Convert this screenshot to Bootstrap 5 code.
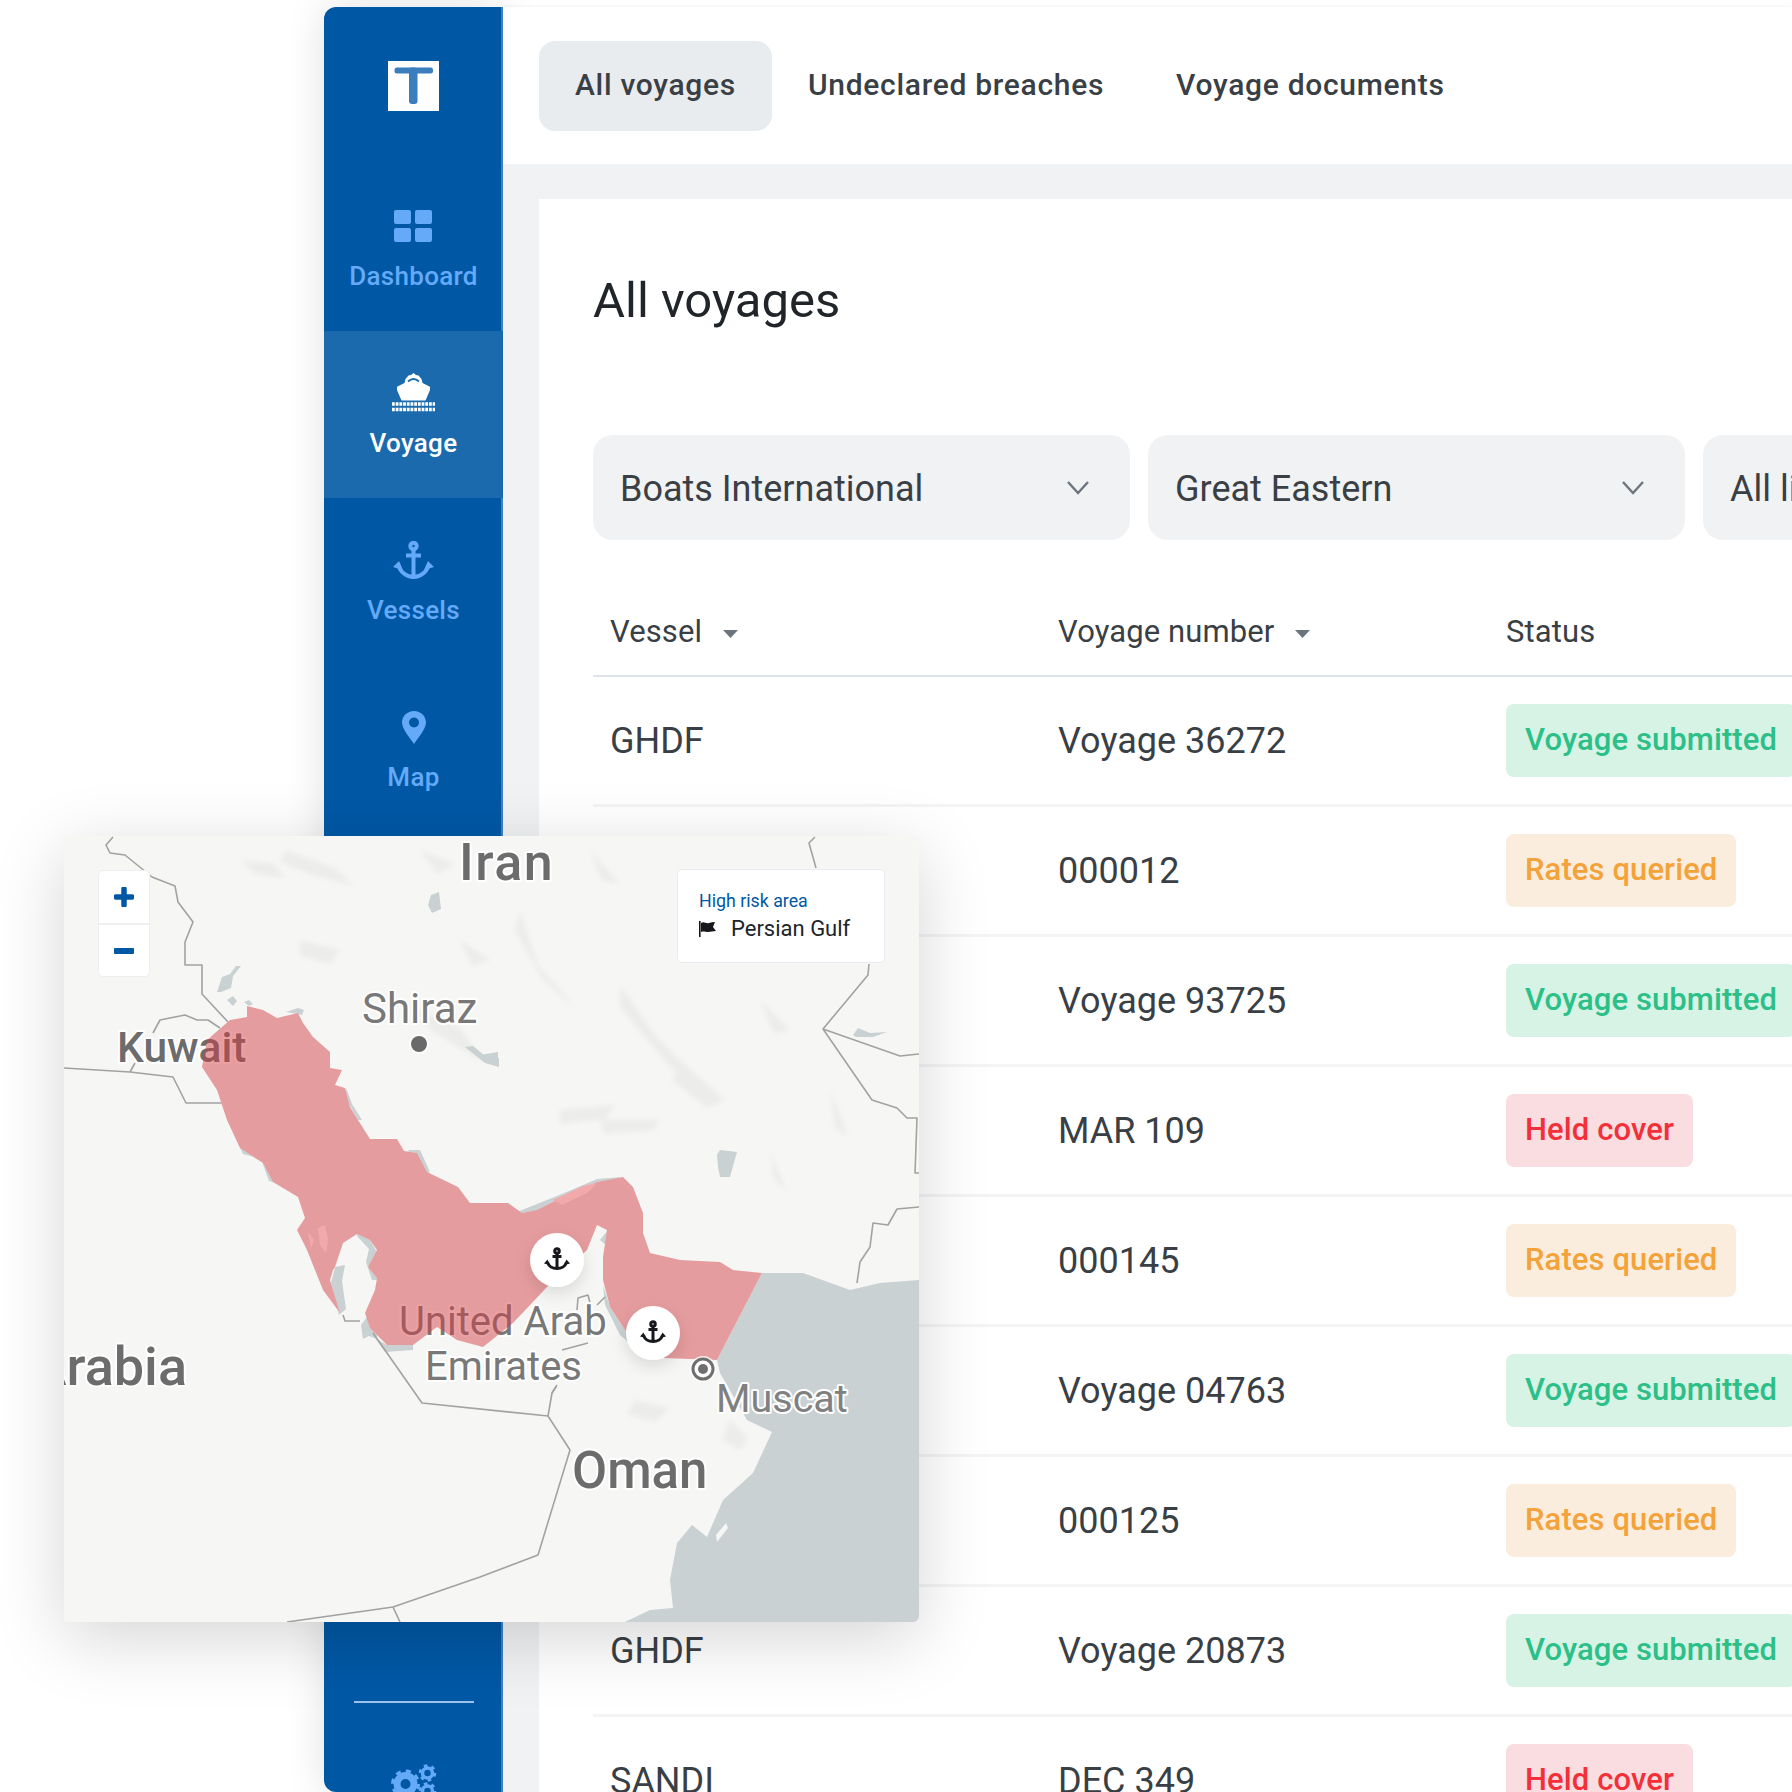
<!DOCTYPE html>
<html lang="en">
<head>
<meta charset="utf-8">
<title>All voyages</title>
<link href="https://cdn.jsdelivr.net/npm/bootstrap@5.3.0/dist/css/bootstrap.min.css" rel="stylesheet">
<style>
html,body{height:1792px;overflow:hidden}
body{background:#fff;font-family:Roboto,"Liberation Sans",sans-serif;color:#3a3f45}
.shell{width:1792px;height:1785px;margin-top:7px;padding-left:324px}
.side{width:179px;flex:none;height:1785px;background:#0058a5;border-radius:12px 0 0 12px;box-shadow:inset -2px 0 0 #3f83c4,0 0 40px rgba(0,0,0,.12);overflow:hidden}
.logo-cell{height:157px}
.logo-mark{width:51px;height:50px;display:block}
.side-item{height:167px;padding-top:40px;color:#64aaf9;font-size:26px;line-height:32px;font-weight:500;letter-spacing:.3px;text-decoration:none}
.side-item.on{background:#1a6aad;color:#fff}
.side-ico{height:44px;margin-bottom:12px}
.side-foot{height:91px;flex:none}
.side-rule{width:120px;height:2px;background:#9cc3ea;margin:0 auto 61px}
.main-col{min-width:0;background:#f1f2f4;box-shadow:0 -1px 3px rgba(0,0,0,.05)}
.topbar{height:157px;background:#fff;padding-left:36px}
.tabs-row{margin-top:34px}
.topbar .nav-link{height:90px;padding:0 36px;font-size:30px;letter-spacing:.7px;font-weight:500;color:#3a3f45;line-height:88px;border-radius:16px;white-space:nowrap}
.topbar .nav-link.active{background:#e9ecef;color:#3a3f45}
.body-pad{padding:35px 0 0 36px}
.sheet{background:#fff;padding:72px 0 0 54px;height:1700px;width:1400px}
.sheet h1{font-size:49px;line-height:60px;font-weight:400;color:#212529;margin:0 0 104px}
.form-select.pick{flex:none;width:537px;height:105px;background-color:#f1f2f4;border:0;border-radius:20px;font-size:36px;color:#3a3f45;padding:2px 27px 0;background-size:30px 22px;background-position:right 37px center;
background-image:url("data:image/svg+xml,%3csvg xmlns='http://www.w3.org/2000/svg' viewBox='0 0 30 22'%3e%3cpath fill='none' stroke='%236c757d' stroke-width='2.4' d='M5 5l10 11 10-11'/%3e%3c/svg%3e")}
.picks{gap:18px;margin-bottom:60px}
.voy{table-layout:fixed;width:1400px;margin:0}
.voy th{height:76px;padding:0 0 10px 17px;font-size:31px;letter-spacing:.1px;font-weight:400;color:#3a3f45;border-bottom:2px solid #dfe3e8;vertical-align:middle;box-shadow:none}
.voy td{height:130px;padding:2px 0 0 17px;font-size:36px;color:#3a3f45;border-bottom:3px solid #f3f4f6;vertical-align:middle}
.voy td:last-child{padding-top:0}
.voy tbody tr:first-child td{height:129px}
.col-a{width:448px}.col-b{width:448px}
.sort-tri{display:inline-block;width:15px;height:8px;margin-left:21px;vertical-align:middle;fill:#6c757d}
.voy .badge{height:73px;line-height:72px;padding:0 19px;font-size:31px;letter-spacing:.1px;font-weight:500;border-radius:8px;display:inline-block}
.st-green{background:#d6f3e6;color:#2cc088}
.st-orange{background:#fbeddd;color:#f3a33a}
.st-red{background:#f9dde0;color:#f3303a}
.map-box{position:absolute;left:64px;top:836px;width:855px;height:786px;background:#f6f6f4;border-radius:0 0 6px 0;box-shadow:0 16px 70px rgba(0,0,0,.17);overflow:hidden}
.map-svg{display:block;width:855px;height:786px}
.mlabel{font-family:Roboto,"Noto Sans",sans-serif;fill:#6c6c6c;paint-order:stroke;stroke:#fff;stroke-width:4px;stroke-linejoin:round}
.ml-soft{fill:#787878}
.ml-mid{fill:#808080}
.ml-wide{letter-spacing:1.500px}
.zoom-ctl{position:absolute;left:34px;top:34px;width:52px;height:107px;background:#fff;border:1px solid #eceef0;border-radius:5px}
.zoom-ctl div{height:53px}
.zoom-ctl div+div{border-top:2px solid #eef0f2}
.legend-box{position:absolute;left:613px;top:33px;width:208px;height:94px;background:#fff;border:1px solid #e9ecef;border-radius:5px;padding:19px 0 0 21px}
.legend-head{font-size:17.8px;line-height:24px;color:#0058a5}
.legend-row{font-size:22px;line-height:30px;color:#212529;gap:15px;margin-top:1px}
</style>
</head>
<body>
<div class="shell d-flex">
  <aside class="side d-flex flex-column">
    <div class="logo-cell d-flex align-items-center justify-content-center">
      <svg class="logo-mark" viewBox="0 0 51 50"><rect width="51" height="50" fill="#fff"/><rect x="6.500" y="6.500" width="38.500" height="6" rx="2.500" fill="#3b7ebd"/><rect x="21" y="6.500" width="8.500" height="36.500" rx="3" fill="#3b7ebd"/></svg>
    </div>
    <a class="side-item d-flex flex-column align-items-center" href="#">
      <span class="side-ico d-flex align-items-center"><svg width="39" height="32" viewBox="0 0 39 32" fill="#64aaf9"><rect width="17" height="14" rx="2"/><rect x="21" width="17" height="14" rx="2"/><rect y="18" width="17" height="14" rx="2"/><rect x="21" y="18" width="17" height="14" rx="2"/></svg></span>
      Dashboard
    </a>
    <a class="side-item on d-flex flex-column align-items-center" href="#">
      <span class="side-ico d-flex align-items-center"><svg width="45" height="40" viewBox="0 0 45 40"><path fill="#fff" d="M22.500 0l2.500 2 2.500.5 3 3.500 1 4 7.500 3.800v3.200l-4.500 10.500h-24L6 17v-3.200L13.500 10l1-4 3-3.500L20 2z"/><path d="M17 8.500q5.500-5 11 0" fill="none" stroke="#1a6aad" stroke-width="1.800"/><path d="M1 31h43M1 36.500h43" fill="none" stroke="#fff" stroke-width="3.400" stroke-dasharray="2.800 .9"/></svg></span>
      Voyage
    </a>
    <a class="side-item d-flex flex-column align-items-center" href="#">
      <span class="side-ico d-flex align-items-center"><svg width="41" height="39" viewBox="0 0 41 39" fill="none" stroke="#64aaf9" stroke-width="4"><circle cx="20.500" cy="5" r="3.200"/><path d="M20.500 8v28M13 14.500h15M5 23c1.500 8 9 13 15.500 13S34.500 31 36 23"/><path d="M0 26l6-6 4 9z M41 26l-6-6-4 9z" fill="#64aaf9" stroke="none"/></svg></span>
      Vessels
    </a>
    <a class="side-item d-flex flex-column align-items-center" href="#">
      <span class="side-ico d-flex align-items-center"><svg width="24" height="33" viewBox="0 0 24 33"><path fill="#64aaf9" fill-rule="evenodd" d="M12 0C5.400 0 0 5 0 11.500 0 18 8 27 12 33c4-6 12-15 12-21.500C24 5 18.600 0 12 0zm0 6.500a5 5 0 1 1 0 10 5 5 0 0 1 0-10z"/></svg></span>
      Map
    </a>
    <div class="side-foot mt-auto">
      <div class="side-rule"></div>
      <svg class="d-block mx-auto" width="46" height="40" viewBox="0 0 46 40" fill="none" stroke="#64aaf9"><circle cx="14.500" cy="20" r="8.500" stroke-width="7"/><circle cx="14.500" cy="20" r="13" stroke-width="3" stroke-dasharray="5 5.200"/><circle cx="36.500" cy="9" r="5" stroke-width="3.500"/><circle cx="36.500" cy="9" r="7.500" stroke-width="2.500" stroke-dasharray="3.600 4.250"/><circle cx="36.500" cy="27" r="5" stroke-width="3.500"/><circle cx="36.500" cy="27" r="7.500" stroke-width="2.500" stroke-dasharray="3.600 4.250"/></svg>
    </div>
  </aside>
  <div class="main-col flex-grow-1 overflow-hidden">
    <nav class="topbar d-flex align-items-start">
      <ul class="nav nav-pills flex-nowrap tabs-row">
        <li class="nav-item"><a class="nav-link active" href="#">All voyages</a></li>
        <li class="nav-item"><a class="nav-link" href="#">Undeclared breaches</a></li>
        <li class="nav-item"><a class="nav-link" href="#">Voyage documents</a></li>
      </ul>
    </nav>
    <div class="body-pad">
      <section class="sheet">
        <h1>All voyages</h1>
        <div class="picks d-flex">
          <select class="form-select pick"><option>Boats International</option></select>
          <select class="form-select pick"><option>Great Eastern</option></select>
          <select class="form-select pick"><option>All lines</option></select>
        </div>
        <table class="table voy">
          <thead><tr>
            <th class="col-a">Vessel<svg class="sort-tri" viewBox="0 0 15 8"><path d="M0 0h15L7.500 8z"/></svg></th>
            <th class="col-b">Voyage number<svg class="sort-tri" viewBox="0 0 15 8"><path d="M0 0h15L7.500 8z"/></svg></th>
            <th>Status</th>
          </tr></thead>
          <tbody>
            <tr><td>GHDF</td><td>Voyage 36272</td><td><span class="badge st-green">Voyage submitted</span></td></tr>
            <tr><td></td><td>000012</td><td><span class="badge st-orange">Rates queried</span></td></tr>
            <tr><td></td><td>Voyage 93725</td><td><span class="badge st-green">Voyage submitted</span></td></tr>
            <tr><td></td><td>MAR 109</td><td><span class="badge st-red">Held cover</span></td></tr>
            <tr><td></td><td>000145</td><td><span class="badge st-orange">Rates queried</span></td></tr>
            <tr><td></td><td>Voyage 04763</td><td><span class="badge st-green">Voyage submitted</span></td></tr>
            <tr><td></td><td>000125</td><td><span class="badge st-orange">Rates queried</span></td></tr>
            <tr><td>GHDF</td><td>Voyage 20873</td><td><span class="badge st-green">Voyage submitted</span></td></tr>
            <tr><td>SANDI</td><td>DEC 349</td><td><span class="badge st-red">Held cover</span></td></tr>
          </tbody>
        </table>
      </section>
    </div>
  </div>
</div>

<div class="map-box">
  <svg class="map-svg" viewBox="64 836 855 786">
    <defs>
      <filter id="ms" x="-40%" y="-40%" width="180%" height="180%"><feDropShadow dx="0" dy="6" stdDeviation="8" flood-color="#000" flood-opacity=".12"/></filter>
      <filter id="soft"><feGaussianBlur stdDeviation="2.500"/></filter>
      <path id="riskshape" d="M247 1006L263 1010 277 1018 298 1013 303 1023 313 1037 330 1052 330 1068 342 1070 335 1085 345 1088 350 1107 358 1120 370 1139 397 1139 404 1151 417 1153 427 1172 458 1187 470 1203 508 1203 522 1213 537 1210 563 1197 597 1182 623 1177 633 1187 643 1213 643 1233 650 1253 680 1260 720 1262 733 1270 762 1273 717 1360 663 1358 627 1333 610 1307 603 1280 603 1257 607 1230 597 1225 587 1250 547 1287 513 1323 483 1347 457 1340 437 1327 413 1345 387 1345 370 1328 365 1313 375 1290 377 1278 368 1267 377 1250 370 1240 357 1234 343 1243 335 1267 333 1270 330 1280 340 1313 323 1290 307 1250 297 1230 305 1218 298 1197 273 1182 263 1163 240 1148 227 1120 217 1090 202 1067 207 1040 230 1020 247 1017z"/>
      <g id="anc" fill="none" stroke="#16181b" stroke-width="3">
        <circle cx="13" cy="3" r="2.300"/><path d="M13 5v15.500M8.500 8.500h9M3.500 14c1 4.500 5.500 6.500 9.500 6.500s8.500-2 9.500-6.500"/><path d="M0 15.500l3.500-4 2.500 5.500zM26 15.500l-3.500-4-2.500 5.500z" fill="#16181b" stroke="none"/>
      </g>
    </defs>
    <!-- terrain -->
    <g fill="#ecedea" filter="url(#soft)">
      <path d="M285 850l50 18 20 18-40-10-35-14zM520 910l18 55 40 45-35-30-28-50zM620 985l35 50 50 50-35-18-50-60zM400 1000l60 28 25 35-50-30zM680 1060l45 40-18 8-35-28zM240 860l35 4 10 14-30-4zM560 1110l55-5-10 14-45 5zM420 850l35 14-18 10zM830 1090l18 46-13-8zM300 940l40 10-10 14-30-8zM460 940l30 20-18 6zM590 850l30 34-18-4zM700 900l20 60-15-20zM760 1000l30 30-16 4z"/>
      <path d="M330 1180l50-30 25-8-38 38zM635 1400l35 8-15 14-28-8zM730 1420l18 18-8 12-18-10zM600 1120l60 0-6 10-50 4zM770 1150l16 40-12-10z"/>
    </g>
    <!-- sea -->
    <path fill="#c9d1d3" d="M762 1273L803 1273 850 1290 880 1283 919 1280V1622H625L650 1610 673 1608 670 1580 677 1543 692 1525 707 1537 723 1500 753 1473 772 1432 747 1420 720 1373 717 1360z"/>
    <path fill="#f6f6f4" d="M716 1535l10-12 2 5-11 14z"/>
    <!-- lakes and coast -->
    <g fill="#c9d1d3">
      <path d="M428 905l3-10 8-3 2 17-9 4zM217 992l5-15 8-3 6-8 5 0-8 10-2 12-10 4zM244 1002l5-2 4 4-4 2zM717 1155l3-5 17 2-4 14-3 11-10 0-2-10zM465 1047l8-1 12 10 14 2 0 9-14-4zM853 1035l5-7 12 5 17-1-14 5-17 0zM227 1000l6-4 4 5-4 5zM480 1055l18-3 0 14-12-4z"/>
      <path d="M240 1148l15 5 13 5 8 25-7-2-8-22-18-5zM342 1100l8 6 8 14 4 0-10-16-6-16zM286 1012l12-4 6 2-2 5zM408 1150l12 0 10 22-5 2zM335 1267l-4 16 8 32 7-6-4-28 3-16zM357 1232l12 6 9 16-5 16 5 10-6 0-6-18 3-13-12-13zM361 1325l6-8 10 14 0 8-8-3-6 3zM375 1338l12 7 26 0 0 5-28 2zM517 1212l45-18 35-15 25-2-40 12-40 20-20 10zM600 1240l8-10 8 25-8 30-2-40zM603 1285l7 22 17 26 5 12-12-10-15-30z"/>
    </g>
    <!-- borders -->
    <g fill="none" stroke="#a2a2a0" stroke-width="1.600" stroke-linejoin="round">
      <path d="M113 837l-7 8 4 8 15 2 27 22 23 9 3 16 15 20-8 20v23h17v29l26 28"/>
      <path d="M153 1033l7-13 25-5 12 5 11 0 12 8"/>
      <path d="M64 1068l66 4 43 5 13 26h36M130 1072l5-9"/>
      <path d="M343 1315l2 6h15M373 1333l49 70 126 13 4-23 5-8M548 1416l22 34-32 105-58 22-87 30-106 15M393 1607l7 15"/>
      <path d="M815 837l-6 6 7 25M869 964l-1 11-45 54 77 27 19-2M823 1029l49 71 25 8 10 10h10l-2 55h4M919 1207l-22 2-9 16-15-2-3 24-10 15-3 21"/>
      <path d="M577 1310l1-12 10-3 2 8M562 1350l26-7M597 1305l8-8M556 1387l-4 6"/>
    </g>
    <use href="#riskshape" fill="#f6f6f4"/>
    <!-- labels below the risk layer -->
    <text class="mlabel ml-wide" x="459" y="880" font-size="52" font-weight="500">Iran</text>
    <text class="mlabel ml-soft" x="362" y="1023" font-size="42">Shiraz</text>
    <circle cx="419" cy="1044" r="10" fill="#fff" opacity=".9"/><circle cx="419" cy="1044" r="8" fill="#6a6a6a"/>
    <text class="mlabel" x="117" y="1062" font-size="42.500" font-weight="500">Kuwait</text>
    <text class="mlabel" x="187" y="1385" font-size="54" font-weight="500" text-anchor="end">Arabia</text>
    <text class="mlabel ml-soft" x="399" y="1335" font-size="40">United Arab</text>
    <text class="mlabel ml-soft" x="425" y="1380" font-size="40">Emirates</text>
    <text class="mlabel ml-mid" x="716" y="1412" font-size="39.500">Muscat</text>
    <text class="mlabel" x="572" y="1488" font-size="51" font-weight="500">Oman</text>
    <!-- high risk area -->
    <use href="#riskshape" fill="rgb(211,60,66)" fill-opacity=".484"/>
    <path fill="#f2a9ab" d="M318 1228l7-3 3 14-2 14-6-8zM553 1200l30-14 14-3-10 10-25 12zM308 1232l6 8-3 8z"/>
    <!-- markers -->
    <circle cx="703" cy="1369" r="13" fill="#fff" opacity=".85"/><circle cx="703" cy="1369" r="10" fill="none" stroke="#6f6f6f" stroke-width="3"/><circle cx="703" cy="1369" r="5" fill="#6f6f6f"/>
    <g filter="url(#ms)"><circle cx="557" cy="1260" r="27" fill="#fff"/></g>
    <use href="#anc" x="544" y="1248"/>
    <g filter="url(#ms)"><circle cx="653" cy="1333" r="27" fill="#fff"/></g>
    <use href="#anc" x="640" y="1321"/>
  </svg>
  <div class="zoom-ctl d-flex flex-column">
    <div class="d-flex align-items-center justify-content-center"><svg width="20" height="20" viewBox="0 0 20 20"><path d="M10 2v16M2 10h16" stroke="#0058a5" stroke-width="5.500" stroke-linecap="round"/></svg></div>
    <div class="d-flex align-items-center justify-content-center"><svg width="20" height="6" viewBox="0 0 20 6"><rect width="20" height="6" rx="1" fill="#0058a5"/></svg></div>
  </div>
  <div class="legend-box">
    <div class="legend-head">High risk area</div>
    <div class="legend-row d-flex align-items-center">
      <svg width="17" height="16" viewBox="0 0 17 16" fill="#16181b"><rect width="1.600" height="16"/><path d="M2 2c3-2 5 1 8 0 2-.6 4-1 6-1l-2 5 3 4c-3 0-5 1-8 1-3 0-4-1-7 0z"/></svg>
      <span>Persian Gulf</span>
    </div>
  </div>
</div>
</body>
</html>
